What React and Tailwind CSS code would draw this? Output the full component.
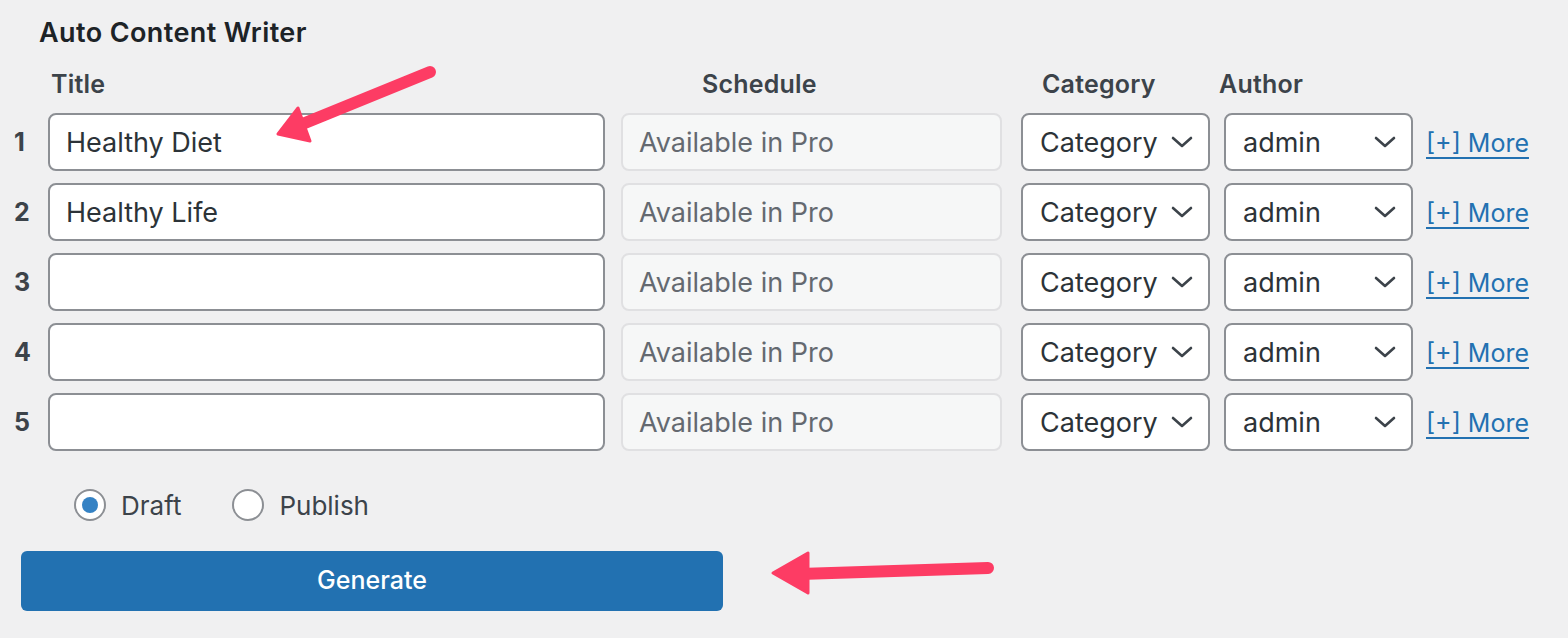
import React from "react";

const font = { fontFamily: "Inter, 'Noto Sans', 'Liberation Sans', sans-serif" };

function Chevron() {
  return (
    <svg width="22" height="14" viewBox="0 0 22 14" fill="none">
      <path d="M2 3 L11 11 L20 3" stroke="#3c434a" strokeWidth="2.6" strokeLinecap="round" strokeLinejoin="round" />
    </svg>
  );
}

function Row({ n, title }) {
  return (
    <div className="flex items-center h-[58px]">
      <div className="w-[48px] pl-[14px] pt-[2px] text-[25px] font-bold text-[#3c434a]">{n}</div>
      <div className="w-[557px] h-[58px] bg-white border-2 border-[#8c8f94] rounded-[8px] flex items-center pl-[16px] pt-[2px] text-[27px] text-[#2c3338]">
        {title}
      </div>
      <div className="ml-[16px] w-[381px] h-[58px] bg-[#f6f7f7] border-2 border-[#e0e0e2] rounded-[8px] flex items-center pl-[16px] pt-[2px] text-[27px] text-[#646970]">
        Available in Pro
      </div>
      <div className="ml-[19px] w-[189px] h-[58px] bg-white border-2 border-[#8c8f94] rounded-[8px] flex items-center justify-between pl-[17px] pr-[15px] text-[27px] text-[#2c3338]">
        <span className="pt-[2px]">Category</span>
        <Chevron />
      </div>
      <div className="ml-[14px] w-[189px] h-[58px] bg-white border-2 border-[#8c8f94] rounded-[8px] flex items-center justify-between pl-[17px] pr-[15px] text-[27px] text-[#2c3338]">
        <span className="pt-[2px]">admin</span>
        <Chevron />
      </div>
      <a className="ml-[13px] pt-[3px] text-[25px] text-[#2271b1] underline underline-offset-[5px] decoration-[2px]" href="#">
        [+] More
      </a>
    </div>
  );
}

export default function App() {
  const rows = ["Healthy Diet", "Healthy Life", "", "", ""];
  return (
    <div className="relative w-full h-[638px] bg-[#f0f0f1] overflow-hidden pt-[17px]" style={font}>
      <h2 className="pl-[39px] h-[32px] leading-[32px] text-[27px] tracking-[0.4px] font-semibold text-[#1d2327]">Auto Content Writer</h2>
      <div className="mt-[20px] h-[32px] flex items-center text-[25px] tracking-[0.2px] font-semibold text-[#3c434a]">
        <div className="w-[51px]" />
        <div className="w-[651px]">Title</div>
        <div className="w-[340px]">Schedule</div>
        <div className="w-[177px]">Category</div>
        <div>Author</div>
      </div>
      <div className="mt-[12px] flex flex-col gap-[12px]">
        {rows.map((t, i) => (
          <Row key={i} n={i + 1} title={t} />
        ))}
      </div>
      <div className="mt-[38px] h-[32px] flex items-center pl-[74px] text-[26px] text-[#3c434a]">
        <div className="w-[32px] h-[32px] rounded-full border-2 border-[#8c8f94] bg-white flex items-center justify-center">
          <div className="w-[16px] h-[16px] rounded-full bg-[#3582c4]" />
        </div>
        <span className="ml-[15px]">Draft</span>
        <div className="ml-[51px] w-[32px] h-[32px] rounded-full border-2 border-[#8c8f94] bg-white" />
        <span className="ml-[15px]">Publish</span>
      </div>
      <div className="mt-[30px] ml-[21px] w-[702px] h-[60px] rounded-[6px] bg-[#2271b1] flex items-center justify-center text-white text-[25px] font-medium">
        Generate
      </div>

      <svg className="absolute left-0 top-0 pointer-events-none" width="1568" height="638">
        <g fill="#fd3c64" stroke="#fd3c64" strokeLinecap="round" strokeLinejoin="round">
          <line x1="430" y1="72" x2="300" y2="125" strokeWidth="12" />
          <polygon points="278,134 298,108 310,141" strokeWidth="3" />
          <line x1="988" y1="568" x2="800" y2="574" strokeWidth="12" />
          <polygon points="773,573 808,553 808,593" strokeWidth="3" />
        </g>
      </svg>
    </div>
  );
}
